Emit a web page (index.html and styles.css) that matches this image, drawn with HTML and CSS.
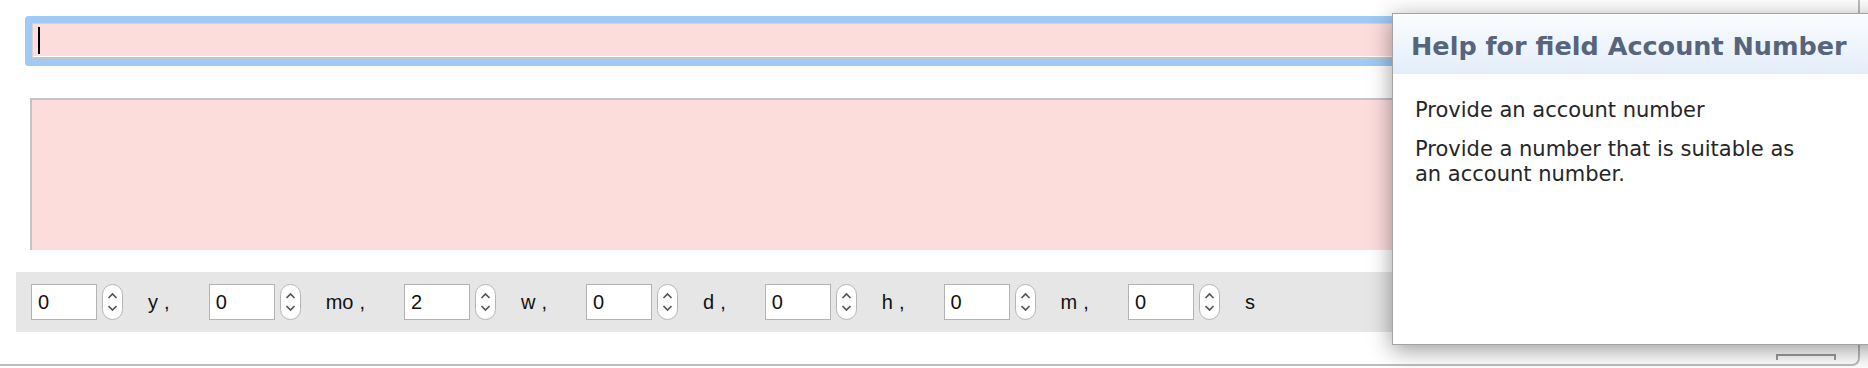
FILE: index.html
```html
<!DOCTYPE html>
<html lang="en">
<head>
  <meta charset="UTF-8">
  <title>Account form</title>
  <link rel="stylesheet" href="styles.css">
</head>
<body>

  <div class="window">
    <div class="account"><span class="caret"></span></div>

    <div class="notes"></div>

    <div class="duration">
      <div class="unit">
        <input class="num" type="text" value="0">
        <span class="spin"><svg width="21" height="36" viewBox="0 0 21 36"><rect x="0.5" y="0.5" width="20" height="35" rx="10" fill="#fff" stroke="#b5b5b5"/><path d="M6.5 14 L10.5 10 L14.5 14" fill="none" stroke="#555" stroke-width="1.7"/><path d="M6.5 22 L10.5 26 L14.5 22" fill="none" stroke="#555" stroke-width="1.7"/></svg></span>
        <span class="lbl">y ,</span>
      </div>
      <div class="unit">
        <input class="num" type="text" value="0">
        <span class="spin"><svg width="21" height="36" viewBox="0 0 21 36"><rect x="0.5" y="0.5" width="20" height="35" rx="10" fill="#fff" stroke="#b5b5b5"/><path d="M6.5 14 L10.5 10 L14.5 14" fill="none" stroke="#555" stroke-width="1.7"/><path d="M6.5 22 L10.5 26 L14.5 22" fill="none" stroke="#555" stroke-width="1.7"/></svg></span>
        <span class="lbl">mo ,</span>
      </div>
      <div class="unit">
        <input class="num" type="text" value="2">
        <span class="spin"><svg width="21" height="36" viewBox="0 0 21 36"><rect x="0.5" y="0.5" width="20" height="35" rx="10" fill="#fff" stroke="#b5b5b5"/><path d="M6.5 14 L10.5 10 L14.5 14" fill="none" stroke="#555" stroke-width="1.7"/><path d="M6.5 22 L10.5 26 L14.5 22" fill="none" stroke="#555" stroke-width="1.7"/></svg></span>
        <span class="lbl">w ,</span>
      </div>
      <div class="unit">
        <input class="num" type="text" value="0">
        <span class="spin"><svg width="21" height="36" viewBox="0 0 21 36"><rect x="0.5" y="0.5" width="20" height="35" rx="10" fill="#fff" stroke="#b5b5b5"/><path d="M6.5 14 L10.5 10 L14.5 14" fill="none" stroke="#555" stroke-width="1.7"/><path d="M6.5 22 L10.5 26 L14.5 22" fill="none" stroke="#555" stroke-width="1.7"/></svg></span>
        <span class="lbl">d ,</span>
      </div>
      <div class="unit">
        <input class="num" type="text" value="0">
        <span class="spin"><svg width="21" height="36" viewBox="0 0 21 36"><rect x="0.5" y="0.5" width="20" height="35" rx="10" fill="#fff" stroke="#b5b5b5"/><path d="M6.5 14 L10.5 10 L14.5 14" fill="none" stroke="#555" stroke-width="1.7"/><path d="M6.5 22 L10.5 26 L14.5 22" fill="none" stroke="#555" stroke-width="1.7"/></svg></span>
        <span class="lbl">h ,</span>
      </div>
      <div class="unit">
        <input class="num" type="text" value="0">
        <span class="spin"><svg width="21" height="36" viewBox="0 0 21 36"><rect x="0.5" y="0.5" width="20" height="35" rx="10" fill="#fff" stroke="#b5b5b5"/><path d="M6.5 14 L10.5 10 L14.5 14" fill="none" stroke="#555" stroke-width="1.7"/><path d="M6.5 22 L10.5 26 L14.5 22" fill="none" stroke="#555" stroke-width="1.7"/></svg></span>
        <span class="lbl">m ,</span>
      </div>
      <div class="unit">
        <input class="num" type="text" value="0">
        <span class="spin"><svg width="21" height="36" viewBox="0 0 21 36"><rect x="0.5" y="0.5" width="20" height="35" rx="10" fill="#fff" stroke="#b5b5b5"/><path d="M6.5 14 L10.5 10 L14.5 14" fill="none" stroke="#555" stroke-width="1.7"/><path d="M6.5 22 L10.5 26 L14.5 22" fill="none" stroke="#555" stroke-width="1.7"/></svg></span>
        <span class="lbl">s</span>
      </div>
    </div>

    <div class="footer">
      <div class="grip"></div>
    </div>
  </div>

  <div class="help">
    <div class="help-title">Help for field Account Number</div>
    <div class="help-body">
      <p>Provide an account number</p>
      <p>Provide a number that is suitable as an account number.</p>
    </div>
  </div>

</body>
</html>
```

FILE: styles.css
```css
body {
  margin: 0;
  width: 1868px;
  height: 368px;
  overflow: hidden;
  background: #fff;
  font-family: "Liberation Sans", Arial, sans-serif;
}

.window {
  width: 1858px;
  height: 364px;
  border-right: 2px solid #bdbdbd;
  border-bottom: 2px solid #bdbdbd;
  border-bottom-right-radius: 8px;
  display: flex;
  flex-direction: column;
}

.account {
  margin: 23px 20px 0 32px;
  height: 36px;
  box-sizing: border-box;
  background: #fddcdc;
  border: 1px solid #d3d3d3;
  border-bottom: 2px solid #c6c6c6;
  border-radius: 1px;
  box-shadow: inset 0 -1px 0 #fff, 0 0 0 7px #9fcaf6;
  display: flex;
  align-items: center;
  padding-left: 5px;
}

.caret {
  width: 2px;
  height: 27px;
  background: #000;
}

.notes {
  margin: 39px 20px 0 30px;
  height: 152px;
  box-sizing: border-box;
  background: #fddcdc;
  border: 2px solid #c4c4c4;
  border-bottom: none;
}

.duration {
  margin: 22px 20px 0 16px;
  height: 60px;
  background: #e6e6e6;
  padding-left: 15px;
  display: flex;
  align-items: center;
}

.unit {
  display: flex;
  align-items: center;
}

.num {
  width: 66px;
  height: 36px;
  box-sizing: border-box;
  margin: 0;
  border: 1px solid #b3b3b3;
  border-radius: 0;
  background: #fff;
  padding: 0 6px;
  font-family: "Liberation Sans", Arial, sans-serif;
  font-size: 20px;
  color: #111;
  outline: none;
}

.spin {
  display: flex;
  margin-left: 5px;
  margin-top: -1px;
}

.lbl {
  margin: 0 39px 0 25px;
  font-size: 20px;
  word-spacing: 0.5px;
  color: #111;
}

.footer {
  flex: 1;
  display: flex;
  justify-content: flex-end;
  align-items: flex-end;
  padding-right: 22px;
}

.grip {
  width: 60px;
  height: 6px;
  box-sizing: border-box;
  margin-bottom: 4px;
  border: 2px solid #9d9d9d;
  border-bottom: none;
}

.help {
  position: absolute;
  left: 1392px;
  top: 13px;
  width: 500px;
  height: 332px;
  box-sizing: border-box;
  background: #fff;
  border: 1px solid #a3a3a3;
  box-shadow: 0 5px 22px rgba(0, 0, 0, 0.4);
}

.help-title {
  height: 60px;
  box-sizing: border-box;
  padding: 3px 0 0 18px;
  display: flex;
  align-items: center;
  background: linear-gradient(#fbfdff, #e3edf9);
  font-family: "DejaVu Sans", sans-serif;
  font-weight: bold;
  font-size: 25.5px;
  color: #56657b;
}

.help-body {
  padding: 24px 0 0 22px;
  font-family: "DejaVu Sans", sans-serif;
  font-size: 21px;
  line-height: 25px;
  color: #262626;
}

.help-body p {
  margin: 0 0 14px;
  max-width: 385px;
}
```
